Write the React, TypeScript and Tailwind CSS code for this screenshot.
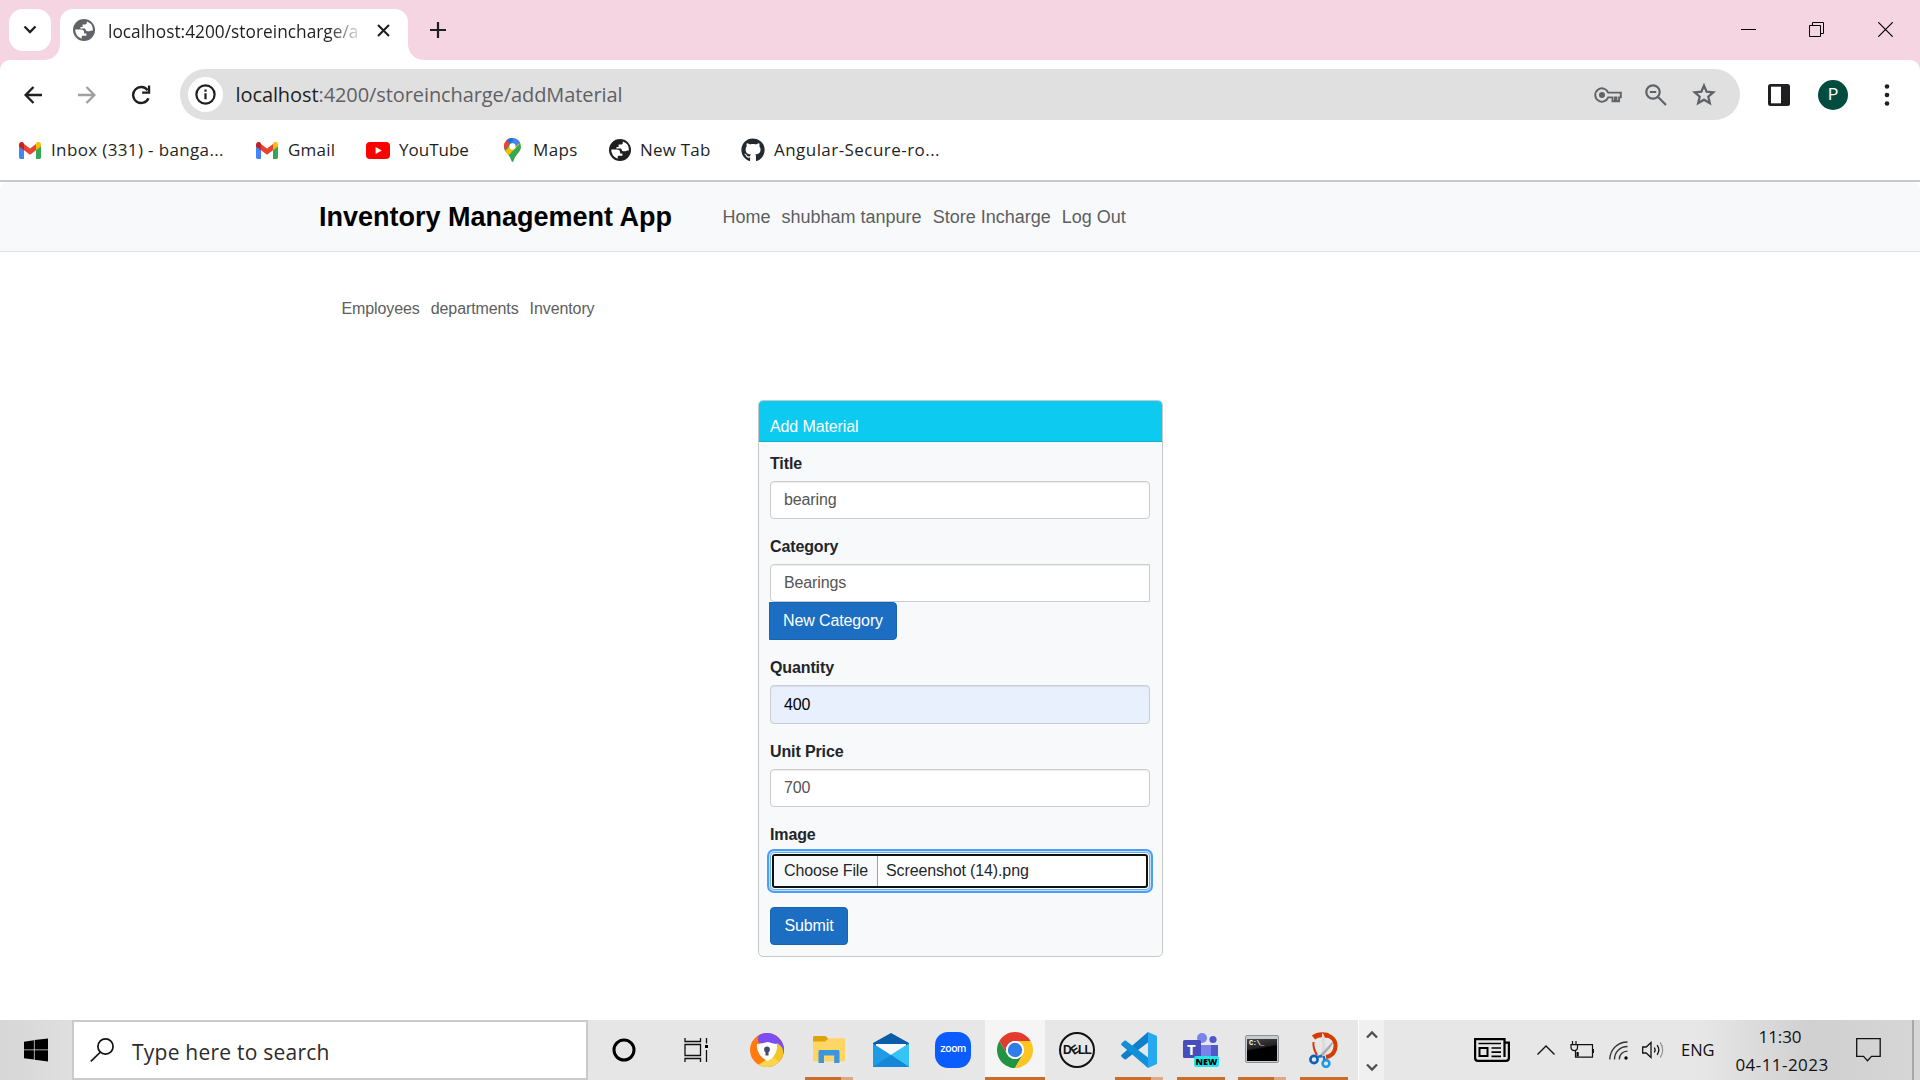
import type { ReactNode } from "react";
import { FaGithub } from "react-icons/fa";

const ui = "font-['Open_Sans','Noto_Sans',sans-serif]";

function Globe({ color }: { color: string }) {
  return (
    <svg width="22" height="22" viewBox="0 0 22 22">
      <circle cx="11" cy="11" r="11" fill={color} />
      <path d="M2.2 10.6H8c2 0 3.1.9 3.1 2.6v1.3h2.3v2.3H10c-.8 0-1.3.5-1.3 1.3v1.6A9 9 0 0 1 2.2 10.6z" fill="#fff" />
      <path d="M13.9 2.6v.9c0 1.3-.8 2.1-2.1 2.1H9.6v2.3H7.4v1.5h3.5c1.4 0 1.9.6 1.9 1.6 0 .8.6 1.2 1.3 1.2h2.2c1.2 0 2-.7 3.6-.6A9 9 0 0 0 13.9 2.6z" fill="#fff" />
    </svg>
  );
}

function GmailIcon() {
  return (
    <svg width="22" height="17" viewBox="0 0 22 17">
      <path d="M0 3.5v11.8C0 16.2.7 17 1.6 17H5V7.5z" fill="#4285f4" />
      <path d="M22 3.5v11.8c0 .9-.7 1.7-1.6 1.7H17V7.5z" fill="#34a853" />
      <path d="M17 2v6.2l5-3.7V2.6C22 .4 19.4-.8 17.6.5z" fill="#fbbc04" />
      <path d="M5 8.2V2l6 4.5L17 2v6.2l-6 4.6z" fill="#ea4335" />
      <path d="M0 2.6v1.9l5 3.7V2L4.4.5C2.6-.8 0 .4 0 2.6z" fill="#c5221f" />
    </svg>
  );
}

function YouTubeIcon() {
  return (
    <svg width="24" height="17" viewBox="0 0 24 17">
      <rect width="24" height="17" rx="4" fill="#f00" />
      <path d="M9.6 4.9v7.2l6.2-3.6z" fill="#fff" />
    </svg>
  );
}

function MapsIcon() {
  return (
    <svg width="17" height="24" viewBox="0 0 17 24">
      <clipPath id="pin">
        <path d="M8.5 0A8.4 8.4 0 0 0 0 8.4c0 3 1.3 4.9 3.4 7.4 2 2.4 3.2 4.2 3.9 6.8.3 1.1.7 1.4 1.2 1.4s.9-.3 1.2-1.4c.7-2.6 1.9-4.4 3.9-6.8 2.1-2.5 3.4-4.4 3.4-7.4A8.4 8.4 0 0 0 8.5 0z" />
      </clipPath>
      <g clipPath="url(#pin)">
        <rect width="17" height="24" fill="#34a853" />
        <path d="M0 14.5 11 2l4.5 4L4 18z" fill="#fbbc04" />
        <path d="M0 0h8L5 6 0 12z" fill="#ea4335" />
        <path d="M3 0h14v3l-5.5 6L5.5 3.5z" fill="#4285f4" />
        <path d="M0 0h4l3 4.5L1.5 11 0 8z" fill="#ea4335" />
        <path d="M8 -1 2.8 2.5 6 5.5 9 3z" fill="#1a73e8" />
      </g>
      <circle cx="8.5" cy="8.4" r="3.1" fill="#fff" />
    </svg>
  );
}

function TabStrip() {
  return (
    <div className={`flex h-[60px] bg-[#f6d5e3] ${ui}`}>
      <div className="mt-[9px] ml-[9px] flex h-[42px] w-[42px] items-center justify-center rounded-[14px] bg-white">
        <svg width="14" height="10" viewBox="0 0 14 10" fill="none" stroke="#1f1f1f" strokeWidth="2.3">
          <path d="M1.5 1.5 7 7l5.5-5.5" />
        </svg>
      </div>
      <div className="relative mt-[9px] ml-[9px] flex h-[51px] w-[348px] items-start rounded-t-[13px] bg-white pt-[10px] pl-[13px]">
        <span className="absolute bottom-0 -left-[15px] h-[15px] w-[15px] bg-[radial-gradient(circle_at_0_0,transparent_14.5px,white_15px)]" />
        <span className="absolute -right-[15px] bottom-0 h-[15px] w-[15px] bg-[radial-gradient(circle_at_100%_0,transparent_14.5px,white_15px)]" />
        <Globe color="#5f6368" />
        <div className="mt-px ml-[13px] w-[254px] overflow-hidden bg-[linear-gradient(to_right,#1f1f1f_220px,transparent_256px)] bg-clip-text text-[17.3px] leading-[24px] tracking-[0.02px] whitespace-nowrap text-transparent">
          localhost:4200/storeincharge/a
        </div>
        <svg className="mt-[5px] ml-[15px]" width="13" height="13" viewBox="0 0 13 13" stroke="#1f1f1f" strokeWidth="2.1">
          <path d="m1 1 11 11M12 1 1 12" />
        </svg>
      </div>
      <svg className="mt-[22px] ml-[22px]" width="16" height="16" viewBox="0 0 16 16" stroke="#1f1f1f" strokeWidth="2.2">
        <path d="M8 0v16M0 8h16" />
      </svg>
      <div className="mt-[22px] mr-[27px] ml-auto flex h-[15px] gap-[53px]">
        <svg width="15" height="15" viewBox="0 0 15 15">
          <path d="M0 7.5h15" stroke="#000" />
        </svg>
        <svg width="16" height="15" viewBox="0 0 16 15" fill="none" stroke="#000">
          <path d="M.5 3.5h11v11H.5zM3.5 3.5v-3h11v11h-3" />
        </svg>
        <svg width="15" height="15" viewBox="0 0 15 15" stroke="#000" strokeWidth="1.2">
          <path d="m.3.3 14.4 14.4M14.7.3.3 14.7" />
        </svg>
      </div>
    </div>
  );
}

function AddressRow() {
  return (
    <div className={`flex h-[69px] items-center ${ui}`}>
      <svg className="ml-[24px]" width="18" height="18" viewBox="0 0 18 18" fill="none" stroke="#1f1f1f" strokeWidth="2.4">
        <path d="M18 9H2M9.5 1 1.6 9l7.9 8" />
      </svg>
      <svg className="ml-[36px]" width="18" height="18" viewBox="0 0 18 18" fill="none" stroke="#a0a0a0" strokeWidth="2.4">
        <path d="M0 9h16M8.5 1l7.9 8-7.9 8" />
      </svg>
      <svg className="ml-[35px]" width="20" height="20" viewBox="0 0 20 20">
        <path d="M17.5 13.2A8 8 0 1 1 16.6 5.3" fill="none" stroke="#1f1f1f" strokeWidth="2.4" />
        <path d="M16.9.5h2.3v8.3h-8.1V6.5h5.8z" fill="#1f1f1f" />
      </svg>
      <div className="ml-[29px] flex h-[51px] w-[1560px] items-center rounded-full bg-[#e0e0e0] pr-[24px] pl-[8px]">
        <div className="flex h-[35px] w-[35px] items-center justify-center rounded-full bg-white">
          <svg width="21" height="21" viewBox="0 0 21 21">
            <circle cx="10.5" cy="10.5" r="9.1" fill="none" stroke="#1f1f1f" strokeWidth="2.2" />
            <path d="M9.4 9.3h2.2v6H9.4zM9.4 5.5h2.2v2.2H9.4z" fill="#1f1f1f" />
          </svg>
        </div>
        <div className="ml-[12.5px] text-[20px] leading-[26px] tracking-[-0.09px] text-[#5f6062]">
          <span className="text-[#1f1f1f]">localhost</span>:4200/storeincharge/addMaterial
        </div>
        <svg className="ml-auto" width="28" height="16" viewBox="0 0 28 16" fill="none" stroke="#5f6368" strokeWidth="1.9">
          <path d="M14.2 5.6A6.7 6.7 0 1 0 14.2 10.4H18.5V14.3H21V10.4h1.5v3.9h2.6v-3.9H26.8V5.6z" />
          <circle cx="8" cy="8" r="3" fill="#5f6368" stroke="none" />
        </svg>
        <svg className="ml-[23px]" width="22" height="22" viewBox="0 0 22 22" fill="none" stroke="#5f6368" strokeWidth="2.2">
          <circle cx="8" cy="8" r="6.7" />
          <path d="M4.8 8h6.4M12.8 12.8l8.2 8.2" />
        </svg>
        <svg className="ml-[25px]" width="24" height="23" viewBox="0 0 24 23">
          <path d="m12 2.6 2.6 6.1 6.7.6-5 4.4 1.5 6.5-5.8-3.5-5.8 3.5 1.5-6.5-5-4.4 6.7-.6z" fill="none" stroke="#5f6368" strokeWidth="2.3" />
        </svg>
      </div>
      <svg className="ml-[28px]" width="22" height="22" viewBox="0 0 22 22">
        <rect width="22" height="22" rx="2.5" fill="#1f1f23" />
        <path d="M3 2.7h10v16.6H3z" fill="#fff" />
      </svg>
      <div className="ml-[28px] flex h-[30px] w-[30px] items-center justify-center rounded-full bg-[#004d40] font-[Roboto,sans-serif] text-[16px] text-white">
        P
      </div>
      <svg className="ml-[36px]" width="6" height="22" viewBox="0 0 6 22" fill="#1f1f1f">
        <circle cx="3" cy="2.5" r="2.3" />
        <circle cx="3" cy="11" r="2.3" />
        <circle cx="3" cy="19.5" r="2.3" />
      </svg>
    </div>
  );
}

function Bookmark({ icon, className, children }: { icon: ReactNode; className: string; children: ReactNode }) {
  return (
    <div className={`flex h-[24px] items-center whitespace-nowrap ${className}`}>
      {icon}
      <span>{children}</span>
    </div>
  );
}

function Bookmarks() {
  return (
    <div className={`flex h-[53px] items-start border-b-2 border-[#c8c8ca] pt-[9px] pl-[19px] text-[17px] leading-[24px] text-[#1f1f1f] ${ui}`}>
      <Bookmark className="w-[237px] gap-[10px] tracking-[0.36px]" icon={<GmailIcon />}>Inbox (331) - banga...</Bookmark>
      <Bookmark className="w-[110px] gap-[10px] tracking-[0.25px]" icon={<GmailIcon />}>Gmail</Bookmark>
      <Bookmark className="w-[138px] gap-[9px]" icon={<YouTubeIcon />}>YouTube</Bookmark>
      <Bookmark className="w-[105px] gap-[12px] tracking-[0.4px]" icon={<MapsIcon />}>Maps</Bookmark>
      <Bookmark className="w-[132px] gap-[9px] tracking-[0.2px]" icon={<Globe color="#1f1f1f" />}>New Tab</Bookmark>
      <Bookmark className="gap-[9px] tracking-[0.45px]" icon={<FaGithub size={24} color="#24292e" />}>Angular-Secure-ro...</Bookmark>
    </div>
  );
}

function NavBar() {
  return (
    <div className="flex h-[70px] items-center rounded-t-[8px] border-b border-[#dee2e6] bg-[#f8f9fb] pl-[319px]">
      <h1 className="w-[403.5px] text-[27px] leading-[34px] font-bold text-black">Inventory Management App</h1>
      <nav className="flex gap-[11px] pt-[2px] text-[18px] leading-[27px] text-[#5d5e60]">
        <a>Home</a>
        <a>shubham tanpure</a>
        <a>Store Incharge</a>
        <a>Log Out</a>
      </nav>
    </div>
  );
}

function Label({ children }: { children: ReactNode }) {
  return <label className="flex h-[45px] items-end pb-[5px] font-bold text-[#212529]">{children}</label>;
}

function AddMaterialCard() {
  return (
    <div className="mt-[79px] ml-[758px] w-[405px] rounded-[5px] border border-[#c8c8ca] bg-[#f8f9fb] text-[16px] leading-[24px] tracking-[-0.12px]">
      <div className="h-[41px] rounded-t-[4px] border-b border-[#0cb0d0] bg-[#0dcaf0] pt-[14px] pl-[11px] text-white">
        Add Material
      </div>
      <form className="-mt-[6px] flex flex-col pr-[12px] pb-[11px] pl-[11px]">
        <Label>Title</Label>
        <div className="h-[38px] rounded-[4px] border border-[#ccc] bg-white px-[13px] py-[6px] text-[#555] shadow-[inset_0_1px_1px_rgba(0,0,0,0.075)]">
          bearing
        </div>
        <Label>Category</Label>
        <div className="h-[38px] rounded-l-[4px] border border-[#ccc] bg-white px-[13px] py-[6px] text-[#555] shadow-[inset_0_1px_1px_rgba(0,0,0,0.075)]">
          Bearings
        </div>
        <button type="button" className="-ml-px h-[38px] w-[128px] rounded-r-[4px] border border-[#1a63af] bg-[#1b6ec2] text-white">
          New Category
        </button>
        <Label>Quantity</Label>
        <div className="h-[39px] rounded-[4px] border border-[#ccc] bg-[#e8f0fe] px-[13px] py-[7px] text-black shadow-[inset_0_1px_1px_rgba(0,0,0,0.075)]">
          400
        </div>
        <Label>Unit Price</Label>
        <div className="h-[38px] rounded-[4px] border border-[#ccc] bg-white px-[13px] py-[6px] text-[#555] shadow-[inset_0_1px_1px_rgba(0,0,0,0.075)]">
          700
        </div>
        <Label>Image</Label>
        <div className="h-[38px] rounded-[4px] border border-[#66afe9] bg-white p-px shadow-[0_0_0_1px_#c4e0ff,0_0_0_3px_#4a9efa]">
          <div className="flex h-full overflow-hidden rounded-[3px] border-2 border-[#101010] text-[#24282c]">
            <span className="w-[104px] border-r border-[#66afe9] bg-[#f8f9fa] pt-[3px] pl-[10px]">Choose File</span>
            <span className="pt-[3px] pl-[8px]">Screenshot (14).png</span>
          </div>
        </div>
        <button type="button" className="mt-[17px] h-[38px] w-[78px] rounded-[4px] border border-[#1a63af] bg-[#1b6ec2] text-white">
          Submit
        </button>
      </form>
    </div>
  );
}

function Page() {
  return (
    <div className="h-[838px] bg-white font-['Liberation_Sans',Arial,sans-serif]">
      <NavBar />
      <nav className="flex gap-[11px] pt-[45px] pl-[341.5px] text-[16px] leading-[24px] tracking-[-0.1px] text-[#5d5e60]">
        <a>Employees</a>
        <a>departments</a>
        <a>Inventory</a>
      </nav>
      <AddMaterialCard />
    </div>
  );
}

function AppSlot({ children, bar, active }: { children: ReactNode; bar?: "full" | "split"; active?: boolean }) {
  return (
    <div className="flex h-[60px] w-[62px] flex-col items-center">
      <div className={`flex h-[57px] w-[60px] items-center justify-center pt-[3px] ${active ? "bg-[#f5f5f5]" : ""}`}>{children}</div>
      {bar === "full" && <div className={active ? "h-[3px] w-[60px] bg-[#c86d2c]" : "h-[3px] w-[48px] bg-[#c86d2c]"} />}
      {bar === "split" && (
        <div className="flex h-[3px]">
          <div className="w-[36px] bg-[#c86d2c]" />
          <div className="w-[12px] bg-[#dfa784]" />
        </div>
      )}
    </div>
  );
}

function PinnedApps() {
  return (
    <div className="flex w-[620px]">
      <AppSlot>
        <svg width="34" height="34" viewBox="0 0 34 34">
          <circle cx="17" cy="17" r="17" fill="#ff7a0f" />
          <path d="M10 1.5A17 17 0 0 1 34 17c0 2-.4 3-.8 4.5L24 12 9 10C7 6 8 3 10 1.5z" fill="#7c4df0" />
          <path d="M33.2 21.5A17 17 0 0 1 8 31.5l10-5L27 10c5 3 7 7 6.2 11.5z" fill="#f3c623" />
          <path d="M9 31.8c4 2.8 14 3 20-3l-8-6z" fill="#f8d750" />
          <path d="M7 11c4 .3 7-1.5 10.5-2 3.5.5 6 2 9.5 2 .6 7-2.5 14-9.5 17C10.5 25 6.5 18 7 11z" fill="#fff" />
          <circle cx="17" cy="16.5" r="2.9" fill="#454c66" />
          <path d="M15.5 17h3v5.5h-3z" fill="#454c66" />
        </svg>
      </AppSlot>
      <AppSlot bar="split">
        <svg width="32" height="28" viewBox="0 0 32 28">
          <path d="M0 1.5C0 .7.7 0 1.5 0h11L15.500 3v3H0z" fill="#dda20c" />
          <path d="M0 5.5h12L16 2.3h14.5c.8 0 1.5.7 1.5 1.5V24c0 .8-.7 1.5-1.5 1.5h-29C.7 25.500 0 24.800 0 24z" fill="#ffd563" />
          <path d="M5.5 27V15.500c0-1 .7-1.600 1.600-1.600h17.800c1 0 1.600.7 1.600 1.600V27h-5.300v-7.500H11V27z" fill="#3a96dd" />
        </svg>
      </AppSlot>
      <AppSlot>
        <svg width="36" height="34" viewBox="0 0 36 34">
          <path d="M0 10 18 0l18 10v4H0z" fill="#0a5ca8" />
          <path d="M3 11h30v14H3z" fill="#f7f8fa" />
          <path d="M0 10.5 18 22l18-11.5V34H0z" fill="#1e9be6" />
          <path d="M36 10.5V34L18 22z" fill="#35c4f3" />
          <path d="M0 34 18 22l18 12z" fill="#1686d8" />
        </svg>
      </AppSlot>
      <AppSlot>
        <div className="flex h-[36px] w-[36px] items-center justify-center rounded-[13px] bg-[#0b5cff] pb-[2px] font-[Inter,sans-serif] text-[10.5px] leading-none font-medium tracking-[-0.4px] text-white">
          zoom
        </div>
      </AppSlot>
      <AppSlot bar="full" active>
        <svg width="36" height="36" viewBox="0 0 48 48">
          <path d="M24 12H44.78A24 24 0 0 0 3.22 12L13.61 30A12 12 0 0 1 24 12z" fill="#e33b2e" />
          <path d="M13.61 30 3.22 12A24 24 0 0 0 24 48L34.39 30A12 12 0 0 1 13.61 30z" fill="#229342" />
          <path d="M34.39 30 24 48A24 24 0 0 0 44.78 12H24A12 12 0 0 1 34.39 30z" fill="#fdc524" />
          <circle cx="24" cy="24" r="12" fill="#fff" />
          <circle cx="24" cy="24" r="9.600" fill="#2f7de9" />
        </svg>
      </AppSlot>
      <AppSlot>
        <div className="flex h-[36px] w-[36px] items-center justify-center rounded-full border-2 border-[#111] font-['Liberation_Sans',sans-serif] text-[12px] leading-none font-bold tracking-[-0.8px] text-[#111]">
          <span>D</span>
          <span className="-rotate-[35deg]">E</span>
          <span>LL</span>
        </div>
      </AppSlot>
      <AppSlot bar="split">
        <svg width="36" height="36" viewBox="0 0 36 36">
          <path d="M27 0v10.500L5 27.200c-.6.5-1.400.4-1.900-.1L.6 24.700c-.6-.6-.6-1.500 0-2z" fill="#0f7fc9" />
          <path d="M27 36V25.500L5 8.800c-.6-.5-1.400-.4-1.900.1L.6 11.300c-.6.6-.6 1.500 0 2z" fill="#1190d8" />
          <path d="M27 0 36 4v28l-9 4z" fill="#27a9f2" />
        </svg>
      </AppSlot>
      <AppSlot bar="full">
        <div className="relative h-[34px] w-[36px]">
          <svg width="36" height="34" viewBox="0 0 36 34">
            <circle cx="30" cy="6.5" r="3.6" fill="#5059c9" />
            <path d="M24 12h11v12H24z" fill="#5059c9" />
            <circle cx="19" cy="5" r="5" fill="#7b83eb" />
            <path d="M14 12h14v12H14z" fill="#7b83eb" />
            <rect y="7" width="18" height="18" rx="1.5" fill="#464ebb" />
          </svg>
          <span className="absolute top-[8px] left-[4px] font-['Open_Sans',sans-serif] text-[15px] leading-[16px] font-bold text-white">T</span>
          <span className="absolute top-[23px] left-[11px] h-[11px] w-[25px] rounded-[2px] bg-[#25e6e6] text-center font-['Open_Sans',sans-serif] text-[9px] leading-[11px] font-extrabold text-black">
            NEW
          </span>
        </div>
      </AppSlot>
      <div className="-ml-px">
        <AppSlot bar="split">
          <div className="-mt-[3px] h-[28px] w-[34px] rounded-[2px] border border-[#8c9299] bg-[#c5cad0] px-px pt-[3px] pb-px">
            <div className="h-full bg-[linear-gradient(170deg,#444_0%,#222_38%,#000_45%)] pl-[2px] font-['Liberation_Mono',monospace] text-[7px] leading-[9px] font-bold tracking-[-0.5px] text-white">
              C:\_
            </div>
          </div>
        </AppSlot>
      </div>
      <AppSlot bar="full">
        <svg width="31" height="36" viewBox="0 0 31 36">
          <path d="M4.500 5.500C8 2.500 13 2 19 3.500" fill="none" stroke="#d83b01" strokeWidth="5" />
          <path d="M17 3C25 5 28 11 26 17.500c-1.500 4.500-4.500 7-9 7.500" fill="none" stroke="#d83b01" strokeWidth="4" />
          <path d="M4.500 10C4 14 5 18 8 23" fill="none" stroke="#d83b01" strokeWidth="2" />
          <path d="M13 1c4 2 4 12 3 25h-3.500z" fill="#dcdcdc" />
          <path d="M24 9c1 4-6 10-12 17l-2-2z" fill="#a9adb2" />
          <circle cx="5" cy="27.500" r="3.600" fill="none" stroke="#0f5fb4" strokeWidth="2.600" />
          <circle cx="17" cy="31.500" r="3.400" fill="none" stroke="#1e9be6" strokeWidth="2.600" />
          <path d="m8 25 5-1M15.500 28l-1-4" stroke="#1273c8" strokeWidth="2.500" />
        </svg>
      </AppSlot>
    </div>
  );
}

function Tray() {
  return (
    <div className="flex h-[60px] flex-1 items-center">
      <svg className="ml-[90px] shrink-0" width="36" height="24" viewBox="0 0 36 24" fill="none" stroke="#000" strokeWidth="2.2">
        <path d="M30.5 4.5V1.1H1.1V20c0 1.8 1 2.9 2.8 2.9h28c1.8 0 3-1.1 3-2.9V4.6h-4.4V19" />
        <path d="M4.5 5.5h22.5M17.5 10h9.5M17.5 14.2h9.5M17.5 18.4h9.5" strokeWidth="1.7" />
        <path d="M5.5 10h8v8h-8z" strokeWidth="2" />
      </svg>
      <svg className="ml-[27px]" width="18" height="10" viewBox="0 0 18 10" fill="none" stroke="#111" strokeWidth="1.400">
        <path d="M.5 9.500 9 1l8.500 8.500" />
      </svg>
      <svg className="mb-px ml-[15px]" width="24" height="17" viewBox="0 0 24 17" fill="none" stroke="#111" strokeWidth="1.200">
        <path d="M7.500 3.600h15v12.500H5.500V10M1 3.600h6.500v3C7.500 8.300 6 9.600 4.300 9.600S1 8.300 1 6.600zM2.500 3.600V0M6 3.600V0" />
        <path d="M23.400 8v4" strokeWidth="1.500" />
        <path d="M6.500 11h2.200v4.500H6.500z" fill="#000" stroke="none" />
      </svg>
      <svg className="ml-[15px]" width="20" height="19" viewBox="0 0 20 19" fill="none" stroke="#333" strokeWidth="1.300">
        <path d="M.8 18.500C1 8.500 8.500 1 18.500 1M5.500 18.500c0-7.500 5.500-13 13-13M10.200 18.500c0-4.800 3.500-8.300 8.300-8.300" />
        <circle cx="17" cy="17" r="1.700" fill="#000" stroke="none" />
      </svg>
      <svg className="ml-[13px]" width="22" height="18" viewBox="0 0 22 18" fill="none" stroke="#111" strokeWidth="1.300">
        <path d="M.7 6v6h3.500L9 16.500v-15L4.200 6z" />
        <path d="M12.300 6.500c1 1.500 1 3.500 0 5M15.200 4.200c2 3 2 6.600 0 9.600" />
        <path d="M18.200 1.500c3.300 4.500 3.300 10.500 0 15" stroke="#999" />
      </svg>
      <span className="mt-px ml-[17px] w-[37px] text-[16.5px]">ENG</span>
      <div className="ml-[14px] flex w-[100px] flex-col items-center pt-[2px] text-[17px] leading-[28px]">
        <span className="mr-[4px] tracking-[-0.1px]">11:30</span>
        <span className="tracking-[0.45px]">04-11-2023</span>
      </div>
      <svg className="ml-[24px]" width="25" height="24" viewBox="0 0 25 24" fill="none" stroke="#111" strokeWidth="1.300">
        <path d="M.7.7h23.500v17.600h-8.700l-4 4.500-4-4.500H.7z" />
      </svg>
      <div className="ml-auto h-[60px] w-[8px] border-l-2 border-[#a8a8a8]" />
    </div>
  );
}

function Taskbar() {
  return (
    <div className={`flex h-[60px] bg-[linear-gradient(to_right,#d6d6d6_0px,#e4e4e4_110px,#e7e7e7_1000px,#e7e7e7_1700px,#d0d0d0_1810px,#d6d6d6_1920px)] text-[#111] ${ui}`}>
      <div className="flex w-[72px] items-center justify-center pr-px">
        <svg width="24" height="24" viewBox="0 0 25 24" fill="#000">
          <path d="M0 3.300 10.300 1.900v9.500H0zM11.100 1.700 25 0v11.400H11.100zM0 12.300h10.300v9.700L0 20.600zM11.100 12.300H25V24l-13.900-1.800z" />
        </svg>
      </div>
      <div className="flex w-[516px] items-center border-2 border-[#cacaca] bg-white pl-[16px]">
        <svg width="25" height="24" viewBox="0 0 25 24" fill="none" stroke="#111" strokeWidth="1.700">
          <circle cx="15.500" cy="8.500" r="7.600" />
          <path d="M10.500 14 .8 23.400" />
        </svg>
        <span className="mt-[3px] ml-[17px] text-[21px] leading-[28px] tracking-[0.23px] text-[#2b2b2b]">Type here to search</span>
      </div>
      <div className="flex w-[148px] items-center pl-[24px]">
        <svg width="24" height="24" viewBox="0 0 24 24">
          <circle cx="12" cy="12" r="10" fill="none" stroke="#000" strokeWidth="3" />
        </svg>
        <svg className="ml-[48px]" width="25" height="24" viewBox="0 0 25 24" fill="none" stroke="#111" strokeWidth="1.300">
          <path d="M1 0v3.500h15.500V0M1 6.500h15.500v11H1zM1 24v-3.500h15.500V24M22.500 0v5.500M22.500 12v12" />
          <path d="M21 7h3v3h-3z" fill="#000" stroke="none" />
        </svg>
      </div>
      <PinnedApps />
      <div className="ml-[2px] flex w-[26px] flex-col items-center justify-between border-l border-white bg-[#f0f0f0] pt-[10px] pb-[8px]">
        <svg width="12" height="9" viewBox="0 0 12 9" fill="none" stroke="#505050" strokeWidth="2.300">
          <path d="m1 7.500 5-5 5 5" />
        </svg>
        <svg width="12" height="9" viewBox="0 0 12 9" fill="none" stroke="#505050" strokeWidth="2.300">
          <path d="m1 1.500 5 5 5-5" />
        </svg>
      </div>
      <Tray />
    </div>
  );
}

export default function App() {
  return (
    <div className="flex h-[1080px] w-[1920px] flex-col overflow-hidden bg-white">
      <div className="bg-[#f6d5e3]">
        <TabStrip />
        <div className="rounded-t-[10px] bg-white">
          <AddressRow />
          <Bookmarks />
        </div>
      </div>
      <Page />
      <Taskbar />
    </div>
  );
}
